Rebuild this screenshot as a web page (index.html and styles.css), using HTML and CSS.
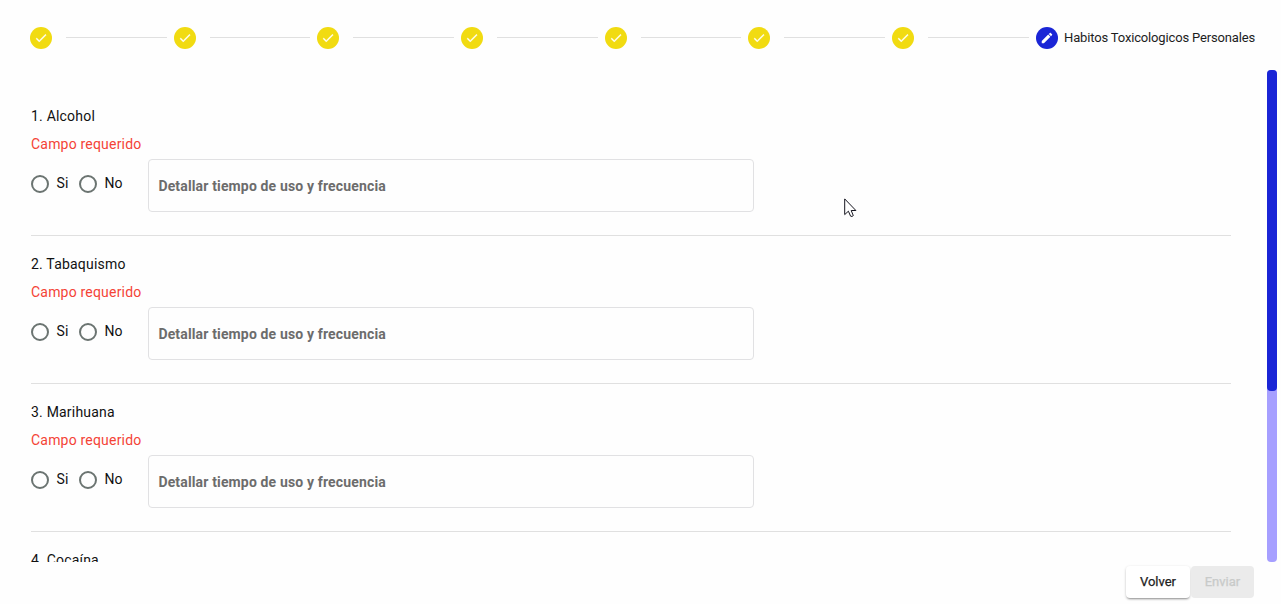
FILE: index.html
```html
<!DOCTYPE html>
<html lang="es">
<head>
<meta charset="utf-8">
<title>Habitos Toxicologicos Personales</title>
<link rel="stylesheet" href="styles.css">
</head>
<body>
<svg class="defs" aria-hidden="true">
  <symbol id="check" viewBox="0 0 24 24"><path d="M9 16.17L4.83 12l-1.42 1.41L9 19 21 7l-1.41-1.41z"/></symbol>
  <symbol id="edit" viewBox="0 0 24 24"><path d="M3 17.25V21h3.75L17.81 9.94l-3.75-3.75L3 17.25zM20.71 7.04c.39-.39.39-1.02 0-1.41l-2.34-2.34c-.39-.39-1.02-.39-1.41 0l-1.83 1.83 3.75 3.75 1.83-1.83z"/></symbol>
</svg>
<header class="stepper">
  <div class="step"><span class="dot"><svg><use href="#check"/></svg></span><i class="line"></i></div>
  <div class="step"><span class="dot"><svg><use href="#check"/></svg></span><i class="line"></i></div>
  <div class="step"><span class="dot"><svg><use href="#check"/></svg></span><i class="line"></i></div>
  <div class="step"><span class="dot"><svg><use href="#check"/></svg></span><i class="line"></i></div>
  <div class="step"><span class="dot"><svg><use href="#check"/></svg></span><i class="line"></i></div>
  <div class="step"><span class="dot"><svg><use href="#check"/></svg></span><i class="line"></i></div>
  <div class="step"><span class="dot"><svg><use href="#check"/></svg></span><i class="line"></i></div>
  <div class="current"><span class="dot active"><svg><use href="#edit"/></svg></span><span class="step-label">Habitos Toxicologicos Personales</span></div>
</header>
<main class="content">
  <div class="questions">
    <section class="question">
      <div class="title">1. Alcohol</div>
      <div class="error">Campo requerido</div>
      <div class="answer">
        <div class="option"><span class="radio"></span><span class="option-text">Si</span></div>
        <div class="option"><span class="radio"></span><span class="option-text">No</span></div>
        <div class="field"><span class="placeholder">Detallar tiempo de uso y frecuencia</span></div>
      </div>
    </section>
    <section class="question">
      <div class="title">2. Tabaquismo</div>
      <div class="error">Campo requerido</div>
      <div class="answer">
        <div class="option"><span class="radio"></span><span class="option-text">Si</span></div>
        <div class="option"><span class="radio"></span><span class="option-text">No</span></div>
        <div class="field"><span class="placeholder">Detallar tiempo de uso y frecuencia</span></div>
      </div>
    </section>
    <section class="question">
      <div class="title">3. Marihuana</div>
      <div class="error">Campo requerido</div>
      <div class="answer">
        <div class="option"><span class="radio"></span><span class="option-text">Si</span></div>
        <div class="option"><span class="radio"></span><span class="option-text">No</span></div>
        <div class="field"><span class="placeholder">Detallar tiempo de uso y frecuencia</span></div>
      </div>
    </section>
    <section class="question">
      <div class="title">4. Cocaína</div>
    </section>
  </div>
  <div class="track"><div class="thumb"></div></div>
</main>
<footer class="actions">
  <button class="btn back">Volver</button>
  <button class="btn send" disabled>Enviar</button>
</footer>
<svg class="cursor" viewBox="0 0 13 20"><path d="M.7 .9V16.6L4.4 13.2L6.6 18.2Q8 19 9.3 17.6L7.2 12.5H11.9Z"/></svg>
</body>
</html>
```
FILE: styles.css
```css
* { box-sizing: border-box; }
body {
  margin: 0;
  height: 604px;
  overflow: hidden;
  display: flex;
  flex-direction: column;
  background: #fefefe;
  color: #111;
  font-family: Roboto, sans-serif;
  font-size: 14px;
}
.defs { display: none; }
.stepper {
  display: flex;
  height: 70px;
  flex: none;
  padding: 27px 26.4px 0 30px;
}
.step { flex: 1; display: flex; height: 22px; }
.dot {
  flex: none;
  width: 22px;
  height: 22px;
  border-radius: 50%;
  background: #f1db11;
  display: flex;
  align-items: center;
  justify-content: center;
}
.dot svg { width: 14px; height: 14px; fill: #fff; stroke: #fff; stroke-width: .6; }
.dot.active svg { stroke: none; }
.dot.active { background: #1a25d6; }
.line { flex: 1; height: 1px; background: #e0e0e0; margin: 10px 7px 0 14px; }
.current { display: flex; width: 219px; height: 22px; }
.step-label {
  margin-left: 6.5px;
  line-height: 21px;
  font-size: 13px;
  letter-spacing: -.16px;
  white-space: nowrap;
  color: #1d1d1d;
}
.content { display: flex; height: 492px; flex: none; overflow: hidden; padding-right: 4px; }
.questions { flex: 1; padding: 18px 36px 0 31px; }
.question { height: 148px; padding-top: 18px; border-bottom: 1px solid #e0e0e0; }
.title, .error { height: 20px; line-height: 20px; letter-spacing: .2px; }
.error { margin-top: 8px; color: #f44336; }
.answer { display: flex; margin-top: 5px; height: 53px; }
.option { display: flex; width: 48px; padding-top: 16px; }
.option + .option { width: 69px; }
.radio {
  flex: none;
  width: 18px;
  height: 18px;
  border: 2px solid #6b7471;
  border-radius: 50%;
}
.option-text { margin-left: 7.4px; line-height: 17px; letter-spacing: .2px; }
.field {
  width: 606px;
  border: 1px solid #e1e1e3;
  border-radius: 4px;
  padding-left: 9.4px;
  line-height: 53px;
  font-weight: 700;
  letter-spacing: .15px;
  color: #6c6c6c;
}
.track { width: 10px; background: #a69fff; border-radius: 4px; }
.thumb { height: 321px; background: #1a25d6; border-radius: 4px; }
.actions { display: flex; justify-content: flex-end; gap: 1px; padding: 4px 27px 0 0; }
.btn {
  height: 32px;
  padding: 0;
  border: 0;
  border-radius: 4px;
  font: 400 13px/30px Roboto, sans-serif;
  -webkit-text-stroke: .25px currentColor;
}
.back {
  width: 64px;
  background: #fff;
  color: #222;
  box-shadow: 0 2px 2px -1px rgba(0,0,0,.3), 0 1px 3px rgba(0,0,0,.2);
}
.send { width: 63px; background: #ebebeb; color: #c8cac9; }
.cursor {
  position: absolute;
  left: 844px;
  top: 198px;
  width: 13px;
  height: 20px;
  fill: #fff;
  stroke: #15151f;
  stroke-width: 1;
}
```
